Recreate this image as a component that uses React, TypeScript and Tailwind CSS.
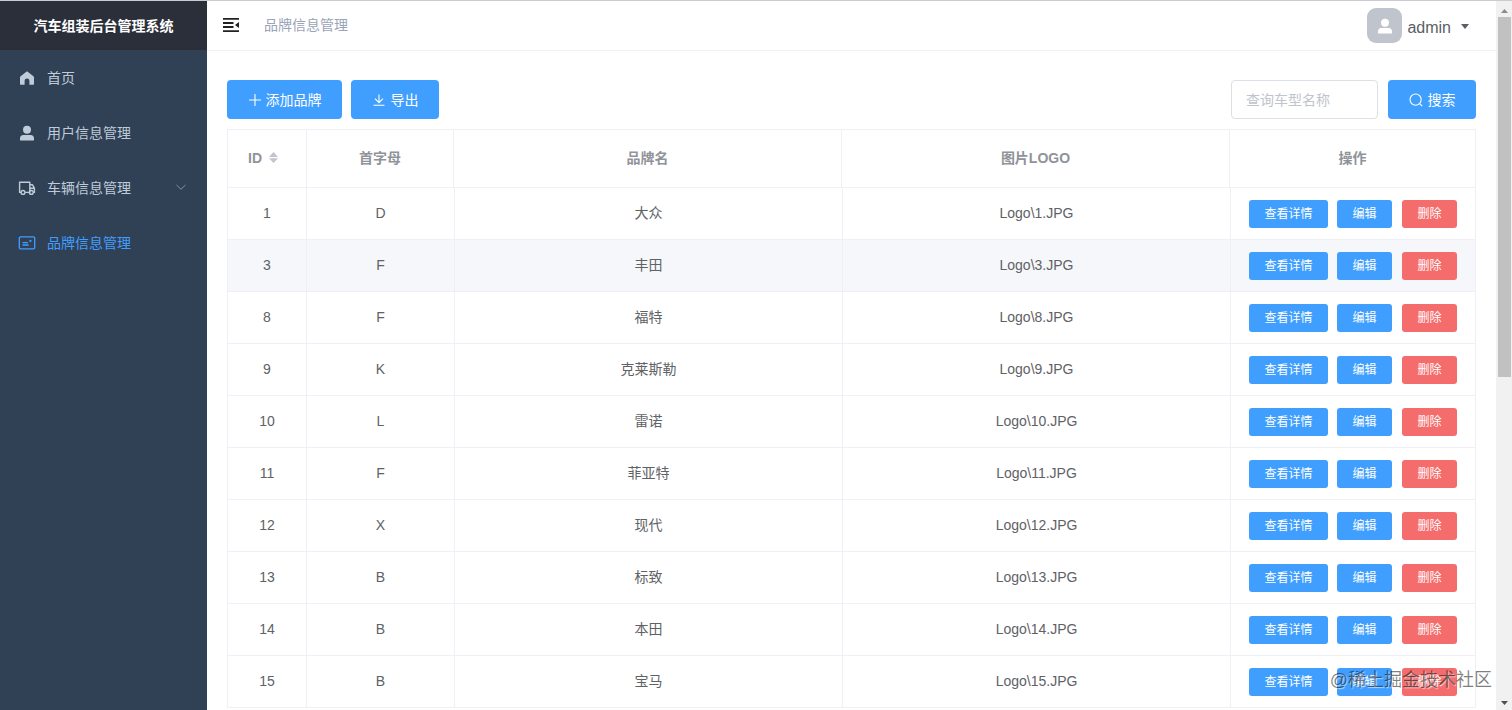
import React from "react";

const brands: [number, string, string][] = [
  [1, "D", "大众"],
  [3, "F", "丰田"],
  [8, "F", "福特"],
  [9, "K", "克莱斯勒"],
  [10, "L", "雷诺"],
  [11, "F", "菲亚特"],
  [12, "X", "现代"],
  [13, "B", "标致"],
  [14, "B", "本田"],
  [15, "B", "宝马"],
];

function HomeIcon() {
  return (
    <svg viewBox="0 0 16 16" className="size-4" fill="currentColor">
      <path d="M8 1.200 1.600 6.300Q1 6.800 1 7.600V14a.8.8 0 0 0 .8.8H5.600V10.800a2.400 2.400 0 0 1 4.800 0v4h3.800A.8.8 0 0 0 15 14V7.600q0-.8-.6-1.300Z" />
    </svg>
  );
}

function UserIcon({ className }: { className: string }) {
  return (
    <svg viewBox="0 0 16 16" className={className} fill="currentColor">
      <circle cx="8" cy="4.700" r="4" />
      <path d="M1 15V13.400a3.500 3.500 0 0 1 3.500-3.500h7a3.500 3.500 0 0 1 3.500 3.500V15a.5.5 0 0 1-.5.5h-13A.5.5 0 0 1 1 15Z" />
    </svg>
  );
}

function TruckIcon() {
  return (
    <svg viewBox="0 0 18 18" className="size-[18px]" fill="none" stroke="currentColor" strokeWidth="1.400" strokeLinejoin="round">
      <path d="M3.200 13.400H1.600V3.200H11.800V13.400H7.200" />
      <path d="M11.800 5.800h2.700l1.900 3.400v4.200h-.8M11.800 9.200h4.600" />
      <circle cx="5" cy="13.400" r="1.900" />
      <circle cx="13.300" cy="13.400" r="1.900" />
    </svg>
  );
}

function PostcardIcon() {
  return (
    <svg viewBox="0 0 18 18" className="size-[18px]" fill="none" stroke="currentColor" strokeWidth="1.300" strokeLinecap="round">
      <rect x="1.300" y="2.800" width="15.400" height="12" rx="1.200" />
      <path d="M5 8.700h4.600M5 11h5.200" />
      <rect x="11.400" y="5.900" width="2" height="2" fill="currentColor" stroke="none" />
    </svg>
  );
}

function MenuItem({ icon, label, active, arrow }: { icon: React.ReactNode; label: string; active?: boolean; arrow?: boolean }) {
  return (
    <li className={`flex h-[55px] items-center pl-[18px] pr-5 ${active ? "text-[#409eff]" : "text-[#bfcbd9]"}`}>
      <span className="flex w-[18px] justify-center">{icon}</span>
      <span className="ml-[11px] flex-1">{label}</span>
      {arrow && (
        <svg viewBox="0 0 12 12" className="mb-0.5 size-3 text-[#8190a2]" fill="none" stroke="currentColor">
          <path d="m1.500 4 4.500 4.300L10.500 4" />
        </svg>
      )}
    </li>
  );
}

function SmallButton({ label, danger }: { label: string; danger?: boolean }) {
  return (
    <button className={`h-7 rounded-[3px] text-xs text-white ${danger ? "ml-[10px] bg-[#f56c6c]" : "bg-[#409eff]"} ${label.length > 2 ? "mr-[9px] w-[79px]" : "w-[55px]"}`}>
      {label}
    </button>
  );
}

function Sidebar() {
  return (
    <aside className="w-[207px] shrink-0 bg-[#304156]">
      <h1 className="flex h-[49px] items-center justify-center bg-[#2b2f3a] text-sm font-bold text-white">汽车组装后台管理系统</h1>
      <ul className="text-sm">
        <MenuItem icon={<HomeIcon />} label="首页" />
        <MenuItem icon={<UserIcon className="size-4" />} label="用户信息管理" />
        <MenuItem icon={<TruckIcon />} label="车辆信息管理" arrow />
        <MenuItem icon={<PostcardIcon />} label="品牌信息管理" active />
      </ul>
    </aside>
  );
}

function Header() {
  return (
    <header className="flex h-[50px] shrink-0 items-center border-b border-[#f0f1f4] pl-4 pr-[27px]">
      <svg viewBox="0 0 16 14" className="mb-0.5 h-3.5 w-4 text-[#222]" fill="currentColor">
        <path d="M0 0h16v1.800H0zM0 4.100h10.500v1.800H0zM0 8.100h10.500v1.800H0zM0 12.200h16V14H0zM16 4v6L12 7z" />
      </svg>
      <span className="mb-0.5 ml-[25px] flex-1 text-sm text-[#9aa3b7]">品牌信息管理</span>
      <span className="flex size-[35px] items-center justify-center rounded-[9px] bg-[#c0c4cc] text-white">
        <UserIcon className="size-4" />
      </span>
      <span className="ml-[5px] mt-1 text-base text-[#5a5e66]">admin</span>
      <svg viewBox="0 0 8 5" className="ml-[10px] mt-0.5 h-[5px] w-2" fill="#5a5e66">
        <path d="M0 0h8L4 5z" />
      </svg>
    </header>
  );
}

function Toolbar() {
  return (
    <div className="flex h-[39px] items-center text-sm text-white">
      <button className="flex h-[39px] w-[115px] items-center justify-center gap-1 rounded-[4px] bg-[#409eff]">
        <svg viewBox="0 0 14 14" className="size-3.5" fill="none" stroke="currentColor" strokeWidth="1.100">
          <path d="M7 1v12M1 7h12" />
        </svg>
        添加品牌
      </button>
      <button className="ml-[9px] flex h-[39px] w-[88px] items-center justify-center gap-[5px] rounded-[4px] bg-[#409eff]">
        <svg viewBox="0 0 14 14" className="size-3.5" fill="none" stroke="currentColor" strokeWidth="1.100">
          <path d="M7 1.500v8M3 5.700l4 4 4-4M1.500 12.300h11" />
        </svg>
        导出
      </button>
      <input placeholder="查询车型名称" className="ml-auto h-[39px] w-[147px] rounded-[4px] border border-[#dcdfe6] px-[14px] text-sm placeholder:text-[#c0c4cc]" />
      <button className="ml-[10px] flex h-[39px] w-[88px] items-center justify-center gap-[5px] rounded-[4px] bg-[#409eff]">
        <svg viewBox="0 0 14 14" className="size-3.5" fill="none" stroke="currentColor" strokeWidth="1.100">
          <circle cx="6.600" cy="6.600" r="5.600" />
          <path d="m10.600 10.600 2.600 2.600" />
        </svg>
        搜索
      </button>
    </div>
  );
}

function BrandTable() {
  const cell = "flex items-center justify-center border-r border-[#eef0f5] pb-0.5";
  return (
    <div className="mt-[10px] border-l border-t border-[#eef0f5] text-sm text-[#606266]">
      <div className="grid h-[58px] grid-cols-[79px_147px_388px_388px_246px] border-b border-[#eef0f5] font-bold text-[#909399]">
        <div className="flex items-center border-r border-[#eef0f5] pl-5 pb-0.5">
          ID
          <svg viewBox="0 0 9 11" className="ml-[7px] h-[11px] w-[9px]" fill="#c0c4cc">
            <path d="M0 5 4.500 0 9 5zM0 6.200h9L4.500 11z" />
          </svg>
        </div>
        <div className={cell}>首字母</div>
        <div className={cell}>品牌名</div>
        <div className={cell}>图片LOGO</div>
        <div className={cell}>操作</div>
      </div>
      {brands.map(([id, letter, name], i) => (
        <div key={id} className={`grid h-[52px] grid-cols-[79px_148px_388px_388px_245px] border-b border-[#eef0f5] ${i === 1 ? "bg-[#f5f7fa]" : ""}`}>
          <div className={cell}>{id}</div>
          <div className={cell}>{letter}</div>
          <div className={cell}>{name}</div>
          <div className={cell}>Logo\{id}.JPG</div>
          <div className="flex items-center border-r border-[#eef0f5] pl-[18px] pt-px">
            <SmallButton label="查看详情" />
            <SmallButton label="编辑" />
            <SmallButton label="删除" danger />
          </div>
        </div>
      ))}
    </div>
  );
}

function Scrollbar() {
  return (
    <div className="flex w-4 shrink-0 flex-col items-center bg-[#f1f1f1]">
      <svg viewBox="0 0 7 4" className="mb-1 mt-2 h-1 w-[7px]" fill="#8b8b8b">
        <path d="M0 4h7L3.500 0z" />
      </svg>
      <div className="h-[360px] w-[13px] bg-[#c1c1c1]" />
      <svg viewBox="0 0 7 4" className="mb-[5px] mt-auto h-1 w-[7px]" fill="#505050">
        <path d="M0 0h7L3.500 4z" />
      </svg>
    </div>
  );
}

export default function App() {
  return (
    <div className="relative flex h-[710px] w-[1512px] overflow-hidden border-t border-[#c9ccd3] bg-white font-['Liberation_Sans','Noto_Sans_CJK_SC',sans-serif]">
      <Sidebar />
      <main className="flex min-w-0 flex-1 flex-col">
        <Header />
        <section className="px-5 pt-[29px]">
          <Toolbar />
          <BrandTable />
        </section>
      </main>
      <Scrollbar />
      <span className="absolute bottom-[17px] right-[20px] text-lg leading-[26px] text-black/50 [text-shadow:1px_1px_1px_rgba(255,255,255,0.6)]">@稀土掘金技术社区</span>
    </div>
  );
}
